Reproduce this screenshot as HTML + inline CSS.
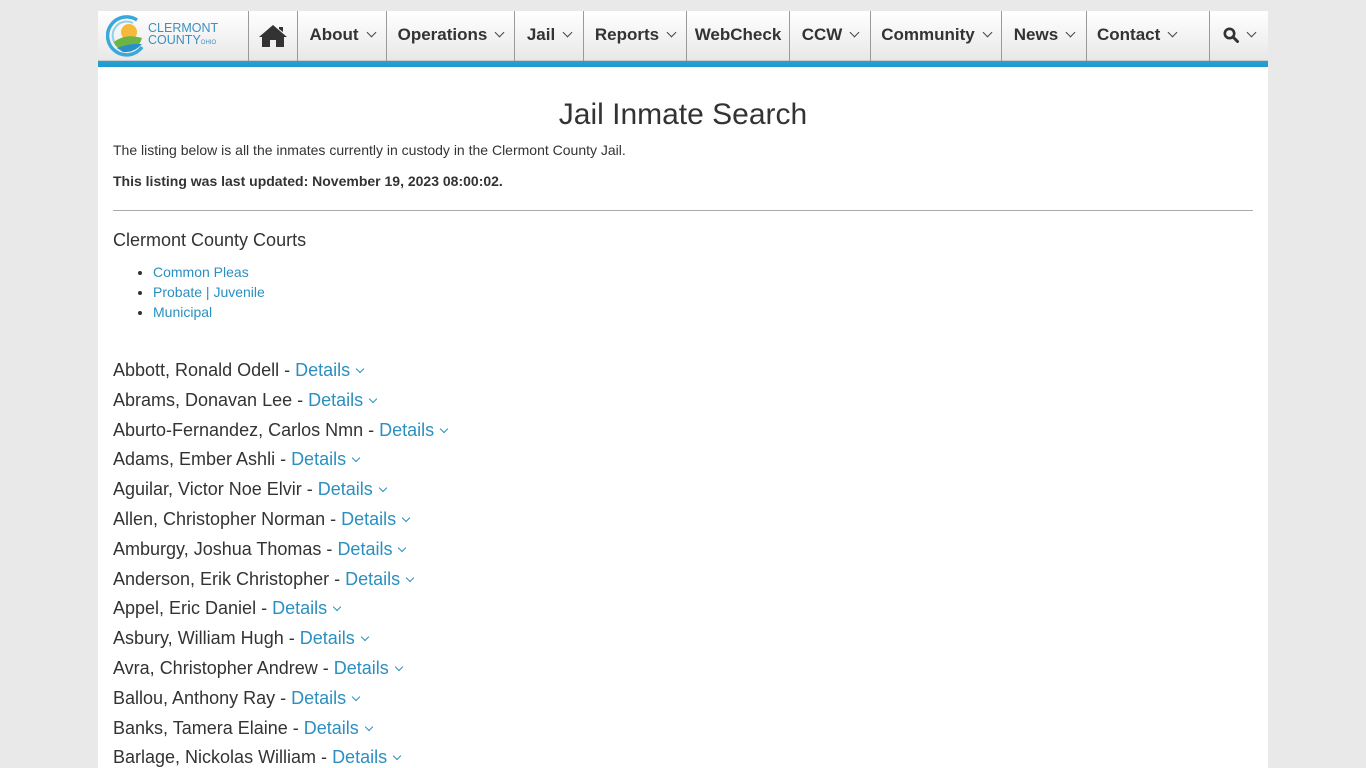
<!DOCTYPE html>
<html><head><meta charset="utf-8"><style>
*{box-sizing:border-box}
html,body{height:768px;overflow:hidden}
body{margin:0;background:#e9e9e9;font-family:"Liberation Sans",Arial,sans-serif;color:#333}
.wrap{position:absolute;left:98px;top:11px;width:1170px;height:757px;background:#fff;overflow:hidden}
.nav{position:absolute;left:0;top:0;width:1170px;height:50px;background:linear-gradient(#fff,#e8e8e8);border-bottom:1px solid #ccc}
.bar{position:absolute;left:0;top:50px;width:1170px;height:6px;background:linear-gradient(#2aa0d0,#1c9bd0)}
.it{position:absolute;top:0;height:50px;border-left:1px solid #9a9a9a;font-weight:bold;font-size:17px;color:#333;line-height:48px;text-align:center}
.chev{display:inline-block;width:7px;height:7px;border-right:1.5px solid #444;border-bottom:1.5px solid #444;transform:rotate(45deg);margin-left:9px;position:relative;top:-4px}
h1{position:absolute;left:0;width:1170px;top:87px;margin:0;text-align:center;font-weight:normal;font-size:30px;color:#333}
.p{position:absolute;left:15px;font-size:14px}
hr{position:absolute;left:15px;top:199px;width:1140px;margin:0;border:0;border-top:1px solid #aaa}
ul{position:absolute;left:15px;top:251px;margin:0;padding-left:40px;font-size:14px;line-height:20px}
li{color:#333}
a{color:#2b8fc0;text-decoration:none}
.list{position:absolute;left:15px;top:345px;font-size:18px;line-height:29.8px}
.list a .chev{width:6px;height:6px;border-color:#2b8fc0;border-width:0 1.3px 1.3px 0;margin-left:7px;top:-4px}
</style></head><body>
<div class="wrap">
<div class="nav">
 <svg style="position:absolute;left:8px;top:3px" width="42" height="44" viewBox="0 0 42 44">
  <path d="M31 6 A19 19 0 1 0 36 33" fill="none" stroke="#3aa8d8" stroke-width="3.5"/>
  <path d="M27 9 A14 14 0 1 0 31 31" fill="none" stroke="#8fd0ec" stroke-width="2"/>
  <circle cx="23" cy="18" r="8" fill="#f6b93b"/>
  <path d="M8 28 Q19 19 36 24 Q32 37 19 37 Q10 35 8 28Z" fill="#6cb544"/>
  <path d="M11 34 Q23 29 36 30 Q28 39 17 38Z" fill="#2a8fc8"/>
 </svg>
 <div style="position:absolute;left:50px;top:11px;color:#3c8fbf;font-size:12.5px;line-height:12px">CLERMONT<br>COUNTY<span style="font-size:6px">OHIO</span></div>
 <div class="it" style="left:150px;width:49px"><svg style="margin-top:13px" width="30" height="24" viewBox="0 0 30 24"><path d="M15 1 L1 13 L4 13 L4 23 L12 23 L12 16 L18 16 L18 23 L26 23 L26 13 L29 13 Z M21 3 L25 3 L25 8 L21 5Z" fill="#333"/></svg></div>
 <div class="it" style="left:199px;width:89px">About<span class="chev"></span></div>
 <div class="it" style="left:288px;width:128px">Operations<span class="chev"></span></div>
 <div class="it" style="left:416px;width:69px">Jail<span class="chev"></span></div>
 <div class="it" style="left:485px;width:103px">Reports<span class="chev"></span></div>
 <div class="it" style="left:588px;width:103px">WebCheck</div>
 <div class="it" style="left:691px;width:81px">CCW<span class="chev"></span></div>
 <div class="it" style="left:772px;width:131px">Community<span class="chev"></span></div>
 <div class="it" style="left:903px;width:85px">News<span class="chev"></span></div>
 <div class="it" style="left:988px;width:124px;border-right:1px solid #9a9a9a;text-align:left;padding-left:10px">Contact<span class="chev"></span></div>
 <div class="it" style="left:1112px;width:58px;border-left:none"><svg width="16" height="16" viewBox="0 0 16 16" style="position:relative;top:3px"><circle cx="6.5" cy="6.5" r="4.7" fill="none" stroke="#333" stroke-width="2.6"/><path d="M10 10 L14.5 14.5" stroke="#333" stroke-width="3" stroke-linecap="round"/></svg><span class="chev"></span></div>
</div>
<div class="bar"></div>
<h1>Jail Inmate Search</h1>
<div class="p" style="top:131px">The listing below is all the inmates currently in custody in the Clermont County Jail.</div>
<div class="p" style="top:162px;font-weight:bold">This listing was last updated: November 19, 2023 08:00:02.</div>
<hr>
<div class="p" style="top:219px;font-size:18px">Clermont County Courts</div>
<ul><li><a>Common Pleas</a></li><li><a>Probate | Juvenile</a></li><li><a>Municipal</a></li></ul>
<div class="list">
<div>Abbott, Ronald Odell - <a>Details<span class="chev"></span></a></div>
<div>Abrams, Donavan Lee - <a>Details<span class="chev"></span></a></div>
<div>Aburto-Fernandez, Carlos Nmn - <a>Details<span class="chev"></span></a></div>
<div>Adams, Ember Ashli - <a>Details<span class="chev"></span></a></div>
<div>Aguilar, Victor Noe Elvir - <a>Details<span class="chev"></span></a></div>
<div>Allen, Christopher Norman - <a>Details<span class="chev"></span></a></div>
<div>Amburgy, Joshua Thomas - <a>Details<span class="chev"></span></a></div>
<div>Anderson, Erik Christopher - <a>Details<span class="chev"></span></a></div>
<div>Appel, Eric Daniel - <a>Details<span class="chev"></span></a></div>
<div>Asbury, William Hugh - <a>Details<span class="chev"></span></a></div>
<div>Avra, Christopher Andrew - <a>Details<span class="chev"></span></a></div>
<div>Ballou, Anthony Ray - <a>Details<span class="chev"></span></a></div>
<div>Banks, Tamera Elaine - <a>Details<span class="chev"></span></a></div>
<div>Barlage, Nickolas William - <a>Details<span class="chev"></span></a></div>
</div>
</div>
</body></html>
